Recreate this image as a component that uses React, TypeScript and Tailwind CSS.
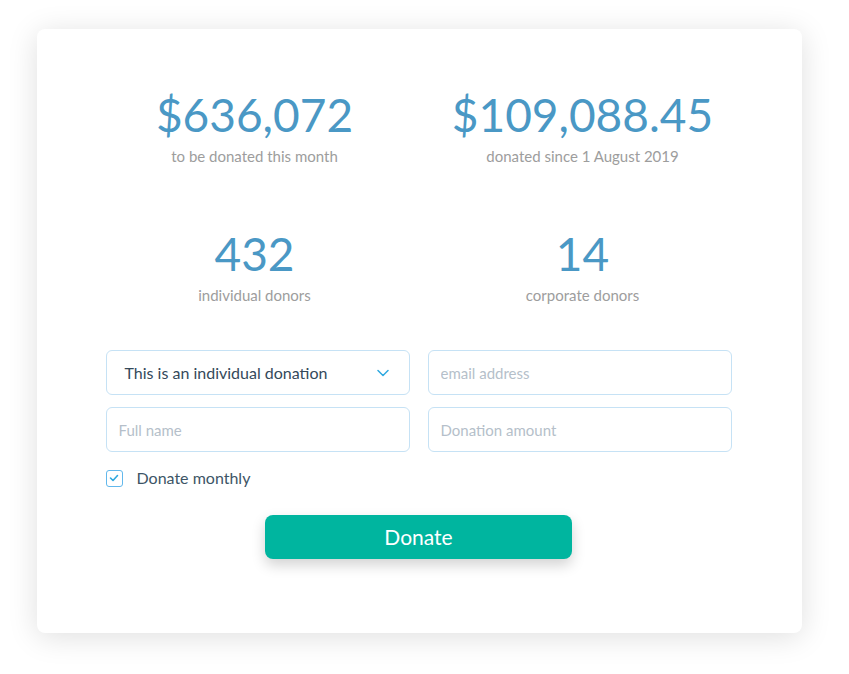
import React from "react";

function Stat({ value, label }: { value: string; label: string }) {
  return (
    <div className="flex flex-col items-center">
      <div className="text-[46px] leading-[56px] text-[#4a98c5]">{value}</div>
      <div className="mt-[4px] text-[15px] leading-[18px] text-[#9d9d9d]">{label}</div>
    </div>
  );
}

export default function App() {
  return (
    <div className="min-h-[674px] w-[849px] bg-white pt-[29px] pl-[37px]" style={{ fontFamily: "Lato, 'Open Sans', sans-serif" }}>
      <div className="w-[765px] h-[604px] rounded-[8px] bg-white shadow-[0_4px_30px_rgba(0,0,0,0.13)] flex flex-col items-center pr-[2px]">
        <div className="mt-[58px] grid grid-cols-[328px_328px] gap-y-[61px]">
          <Stat value="$636,072" label="to be donated this month" />
          <Stat value="$109,088.45" label="donated since 1 August 2019" />
          <Stat value="432" label="individual donors" />
          <Stat value="14" label="corporate donors" />
        </div>
        <div className="mt-[46px] w-[626px] grid grid-cols-2 gap-x-[18px] gap-y-[12px]">
          <div className="h-[45px] rounded-[6px] border border-[#c6e2f5] flex items-center justify-between pl-[18px] pr-[20px]">
            <span className="text-[16px] text-[#34495a]">This is an individual donation</span>
            <svg width="12" height="8" viewBox="0 0 12 8" fill="none">
              <path d="M1 1.5 L6 6.5 L11 1.5" stroke="#2fa9e0" strokeWidth="1.5" strokeLinecap="round" strokeLinejoin="round" />
            </svg>
          </div>
          <input className="h-[45px] rounded-[6px] border border-[#c6e2f5] px-[12px] text-[15px] outline-none placeholder:text-[#b5bfca]" placeholder="email address" />
          <input className="h-[45px] rounded-[6px] border border-[#c6e2f5] px-[12px] text-[15px] outline-none placeholder:text-[#b5bfca]" placeholder="Full name" />
          <input className="h-[45px] rounded-[6px] border border-[#c6e2f5] px-[12px] text-[15px] outline-none placeholder:text-[#b5bfca]" placeholder="Donation amount" />
        </div>
        <div className="w-[626px] mt-[14px] flex items-center">
          <div className="w-[17px] h-[17px] rounded-[3px] border border-[#62b8ec] flex items-center justify-center">
            <svg width="10" height="8" viewBox="0 0 10 8" fill="none">
              <path d="M1.5 4 L4 6.5 L8.5 1.5" stroke="#2fa9e0" strokeWidth="1.6" strokeLinecap="round" strokeLinejoin="round" />
            </svg>
          </div>
          <span className="ml-[14px] text-[16px] text-[#3d5566]">Donate monthly</span>
        </div>
        <button className="mt-[25px] w-[307px] h-[44px] rounded-[8px] bg-[#00b59f] text-white text-[21px] shadow-[0_6px_14px_rgba(0,0,0,0.18)]">
          Donate
        </button>
      </div>
    </div>
  );
}
